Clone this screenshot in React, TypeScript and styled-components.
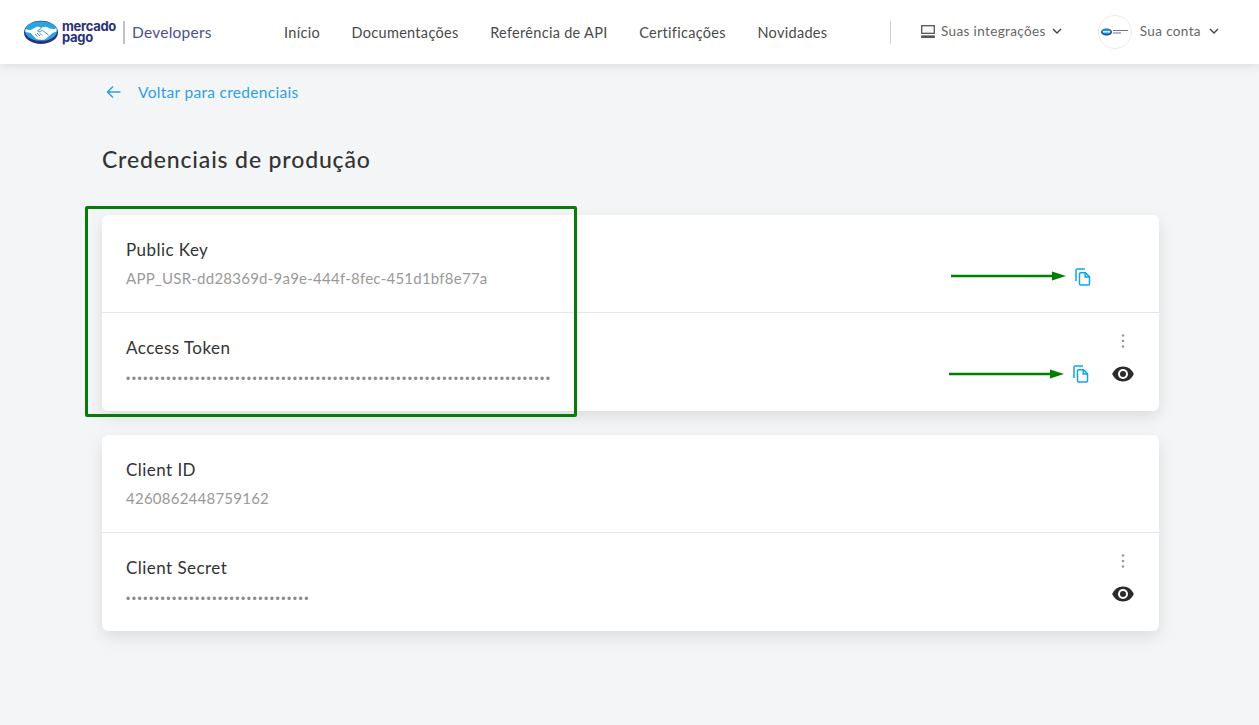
import React from "react";
import styled, { createGlobalStyle } from "styled-components";

const Global = createGlobalStyle`
  html, body { margin: 0; padding: 0; background: #f4f5f7; }
  body { font-family: Lato, "Open Sans", sans-serif; color: #333; }
  * { box-sizing: border-box; }
`;
const Page = styled.div`
  position: relative;
  width: 1259px;
  height: 725px;
  overflow: hidden;
  background: #f4f5f7;
`;
const Header = styled.header`
  height: 64px;
  background: #fff;
  box-shadow: 0 1px 10px rgba(0, 0, 0, 0.12);
  display: flex;
  align-items: center;
  padding-left: 24px;
`;
const Brand = styled.div`
  display: flex;
  align-items: center;
  width: 260px;
`;
const BrandWords = styled.div`
  margin-left: 4px;
  font-family: "Inter", sans-serif;
  font-weight: 700;
  font-size: 13px;
  line-height: 11px;
  letter-spacing: -0.3px;
  color: #2d3277;
`;
const BrandRule = styled.span`
  width: 2px;
  height: 23px;
  margin: 0 7px 0 7px;
  background: #bcbfd6;
`;
const BrandName = styled.span`
  font-size: 15.5px;
  color: #4a5190;
  letter-spacing: 0.25px;
`;
const Nav = styled.nav`
  display: flex;
  gap: 31.6px;
  width: 606px;
`;
const NavLink = styled.a`
  font-size: 14.5px;
  color: #4a4a4a;
  letter-spacing: 0.3px;
`;
const VRule = styled.span`
  width: 1px;
  height: 23px;
  background: #d0d0d0;
`;
const Menu = styled.div`
  display: flex;
  align-items: center;
  font-size: 13.5px;
  color: #666;
  letter-spacing: 0.37px;
`;
const MenuText = styled.span`
  margin-bottom: 2px;
`;
const MenuChevron = styled.svg`
  margin-bottom: 2px;
`;
const Integrations = styled(Menu)`
  margin-left: 30px;
  gap: 6px;
`;
const Account = styled(Menu)`
  margin-left: 36px;
  gap: 8px;
`;
const Avatar = styled.span`
  width: 34px;
  height: 34px;
  border-radius: 50%;
  border: 1px solid #ececec;
  display: flex;
  align-items: center;
  justify-content: center;
`;
const Main = styled.main`
  padding: 0 100px 0 102px;
`;
const Back = styled.a`
  display: flex;
  align-items: center;
  height: 20px;
  margin: 18px 0 0 4px;
  gap: 16px;
  font-size: 15.5px;
  color: #2c9fe6;
  letter-spacing: 0.3px;
`;
const Title = styled.h1`
  margin: 44px 0 42px;
  font-size: 23px;
  line-height: 27px;
  font-weight: 500;
  color: #333;
  letter-spacing: 0.85px;
`;
const Card = styled.section`
  background: #fff;
  border-radius: 6px;
  box-shadow: 0 6px 16px rgba(0, 0, 0, 0.1);
  margin-bottom: 24px;
`;
const Row = styled.div`
  height: 97px;
  padding: 24px 25px 0 24px;
  display: flex;
  justify-content: space-between;
  & + & {
    border-top: 1px solid #e6e6e6;
    height: 99px;
  }
`;
const Label = styled.div`
  font-size: 17px;
  line-height: 22px;
  color: #333;
  letter-spacing: 0.45px;
`;
const Value = styled.div`
  margin-top: 7px;
  font-size: 15px;
  line-height: 20px;
  color: #999;
  letter-spacing: 0.24px;
`;
const Dots = styled.div`
  margin-top: 8px;
  padding-top: 2px;
  font-family: "Liberation Sans", sans-serif;
  font-size: 12px;
  line-height: 20px;
  color: #8a8a8a;
  letter-spacing: 1.55px;
`;
const Actions = styled.div<{ $lift?: number }>`
  display: grid;
  grid-template-columns: 16px 22px;
  grid-template-rows: 14px 18px;
  column-gap: 23px;
  row-gap: 17px;
  justify-items: center;
  align-items: center;
  margin-top: ${(p) => -(p.$lift ?? 2)}px;
`;
const Kebab = styled.svg`
  grid-column: 2;
  grid-row: 1;
`;
const Copy = styled.svg<{ $shift?: number }>`
  grid-column: 1;
  grid-row: 2;
  transform: translateX(${(p) => p.$shift ?? 0}px);
`;
const Eye = styled.svg`
  grid-column: 2;
  grid-row: 2;
`;
const Highlight = styled.div`
  position: absolute;
  left: 85px;
  top: 206px;
  width: 492px;
  height: 211px;
  border: 3px solid #008000;
  border-radius: 2px;
  pointer-events: none;
`;
const Arrow = styled.svg<{ $x: number; $y: number }>`
  position: absolute;
  left: ${(p) => p.$x}px;
  top: ${(p) => p.$y}px;
`;

const KebabIcon = () => (
  <Kebab width="4" height="14" viewBox="0 0 4 14" fill="#999">
    <circle cx="2" cy="1.5" r="1.3" />
    <circle cx="2" cy="7" r="1.3" />
    <circle cx="2" cy="12.5" r="1.3" />
  </Kebab>
);
const CopyIcon = ({ shift }: { shift?: number }) => (
  <Copy $shift={shift} width="16" height="18" viewBox="0 0 16 18" fill="none" stroke="#0ea5e9" strokeWidth="1.5">
    <path d="M10 1H2.200A1.200 1.200 0 0 0 1 2.200V13" />
    <path d="M5.500 4.700h5l4 4.200v7a1 1 0 0 1-1 1H5.500a1 1 0 0 1-1-1V5.700a1 1 0 0 1 1-1z" />
    <path d="M10.200 4.900v4h4" />
  </Copy>
);
const EyeIcon = () => (
  <Eye width="22" height="16" viewBox="0 0 22 16">
    <path fill="#2b2b2b" d="M11 .5C6 .5 2 3.600.2 8 2 12.400 6 15.500 11 15.500S20 12.400 21.800 8C20 3.600 16 .5 11 .5z" />
    <circle cx="11" cy="8" r="5" fill="#fff" />
    <circle cx="11" cy="8" r="3" fill="#2b2b2b" />
  </Eye>
);
const Chevron = () => (
  <MenuChevron width="10" height="6" viewBox="0 0 10 6" fill="none" stroke="#444" strokeWidth="1.400">
    <path d="M1 1l4 4 4-4" />
  </MenuChevron>
);
const ArrowMark = ({ x, y }: { x: number; y: number }) => (
  <Arrow $x={x} $y={y} width="116" height="10" viewBox="0 0 116 10">
    <path d="M0 5h102" stroke="#008000" strokeWidth="2.400" strokeLinecap="round" />
    <path d="M101 0.500L115 5L101 9.500z" fill="#008000" />
  </Arrow>
);
const Handshake = () => (
  <svg width="34" height="24" viewBox="0 0 34 24">
    <ellipse cx="17" cy="12.400" rx="17" ry="11.600" fill="#2d3277" />
    <ellipse cx="17" cy="11" rx="16" ry="9.800" fill="#2aa5e3" />
    <path
      fill="#fff"
      d="M1.500 9c2 1 3.900 1.300 5.600.7l4.700-2.500c1.200-.6 2.400-.6 3.400-.2l2 .8 2.400-.8c1.400-.4 2.600-.3 3.800.3l2.400 1.300c1.600.7 4.300.6 6.700-.4v3.400l-3.900 1.300-7.400 6.300c-.8.6-1.600.6-2.400.2-.7.6-1.700.7-2.500.2-.9.3-1.700.2-2.400-.4-.8.1-1.500-.1-2.100-.7L6.600 13.100 1.500 12z"
    />
    <path fill="none" stroke="#1b6fb0" strokeWidth=".8" d="M17.600 8l-4 2.800c.9 1 2.200 1 3.300.3l1.500-.9 6.200 5M11 14l2.600 2.500M13 13l3 3M15.200 12.600l3 3" />
  </svg>
);

export default function App() {
  return (
    <Page>
      <Global />
      <Header>
        <Brand>
          <Handshake />
          <BrandWords>
            mercado
            <br />
            pago
          </BrandWords>
          <BrandRule />
          <BrandName>Developers</BrandName>
        </Brand>
        <Nav>
          <NavLink>Início</NavLink>
          <NavLink>Documentações</NavLink>
          <NavLink>Referência de API</NavLink>
          <NavLink>Certificações</NavLink>
          <NavLink>Novidades</NavLink>
        </Nav>
        <VRule />
        <Integrations>
          <svg width="14" height="14" viewBox="0 0 14 14" fill="none" stroke="#555" strokeWidth="1.300">
            <rect x=".7" y=".7" width="12.600" height="7.600" />
            <path d="M.1 11.700h13.800" strokeWidth="2.600" />
          </svg>
          <MenuText>Suas integrações</MenuText>
          <Chevron />
        </Integrations>
        <Account>
          <Avatar>
            <svg width="28" height="8" viewBox="0 0 28 8">
              <ellipse cx="5.500" cy="4" rx="5.500" ry="3.500" fill="#2d3277" />
              <ellipse cx="5.500" cy="3.600" rx="4.500" ry="2.600" fill="#1b9fe0" />
              <path d="M2 3.800h7" stroke="#fff" strokeWidth="1.200" />
              <path d="M12 2.500h15M12 5h8" stroke="#6a6fa8" strokeWidth="1.200" />
            </svg>
          </Avatar>
          <MenuText>Sua conta</MenuText>
          <Chevron />
        </Account>
      </Header>
      <Main>
        <Back>
          <svg width="16" height="14" viewBox="0 0 16 14" fill="none" stroke="#2c9fe6" strokeWidth="1.500">
            <path d="M14.500 7H1.500M7 1.500L1.500 7 7 12.500" />
          </svg>
          Voltar para credenciais
        </Back>
        <Title>Credenciais de produção</Title>
        <Card>
          <Row>
            <div>
              <Label>Public Key</Label>
              <Value>APP_USR-dd28369d-9a9e-444f-8fec-451d1bf8e77a</Value>
            </div>
            <Actions>
              <CopyIcon shift={2} />
            </Actions>
          </Row>
          <Row>
            <div>
              <Label>Access Token</Label>
              <Dots>{"•".repeat(74)}</Dots>
            </div>
            <Actions $lift={3}>
              <KebabIcon />
              <CopyIcon />
              <EyeIcon />
            </Actions>
          </Row>
        </Card>
        <Card>
          <Row>
            <div>
              <Label>Client ID</Label>
              <Value>4260862448759162</Value>
            </div>
          </Row>
          <Row>
            <div>
              <Label>Client Secret</Label>
              <Dots>{"•".repeat(32)}</Dots>
            </div>
            <Actions $lift={3}>
              <KebabIcon />
              <EyeIcon />
            </Actions>
          </Row>
        </Card>
      </Main>
      <Highlight />
      <ArrowMark x={951} y={271} />
      <ArrowMark x={949} y={369} />
    </Page>
  );
}
